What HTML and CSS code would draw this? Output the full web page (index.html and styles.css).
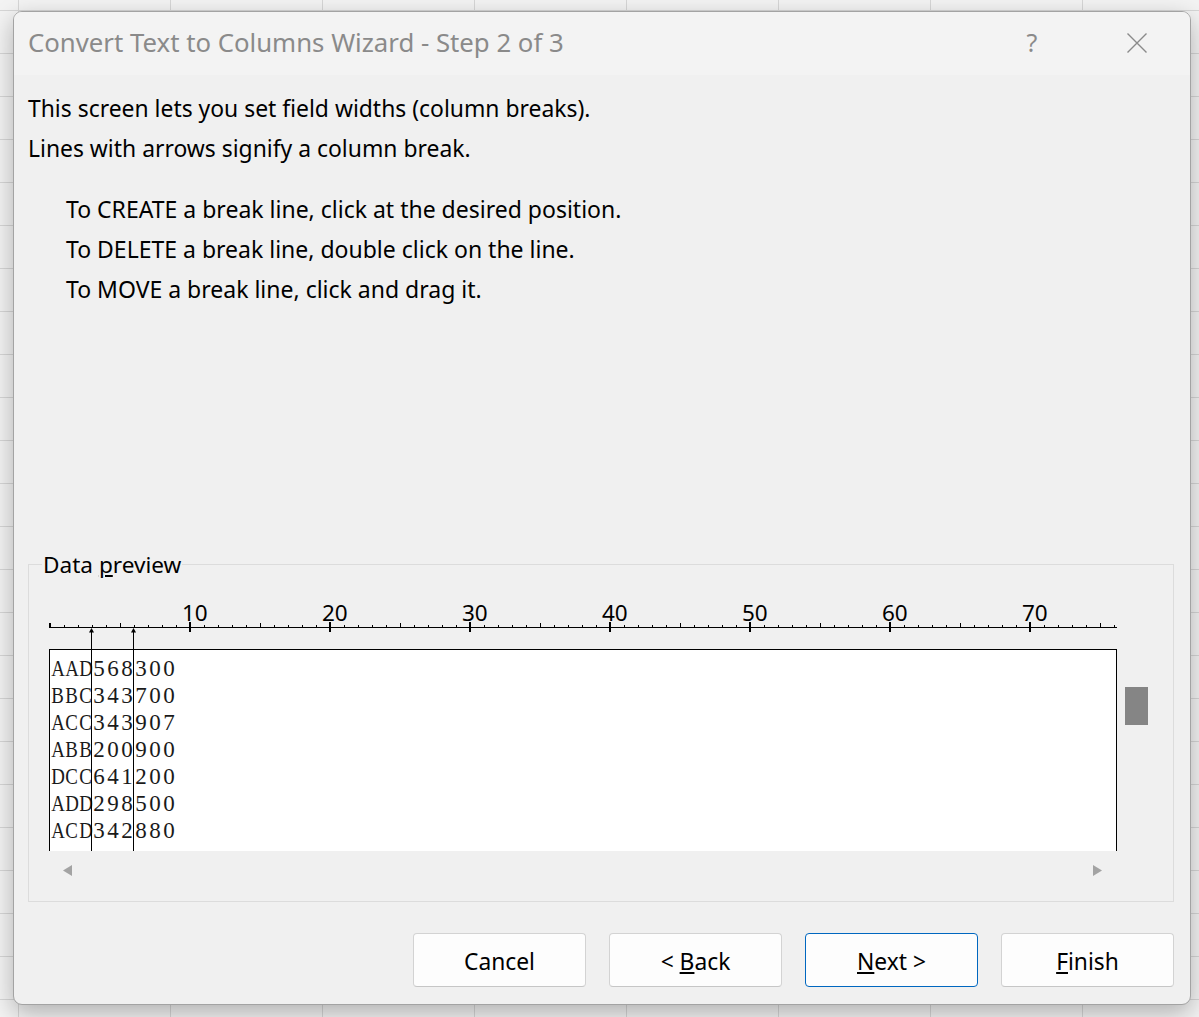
FILE: index.html
```html
<!DOCTYPE html>
<html lang="en">
<head>
<meta charset="utf-8">
<title>Convert Text to Columns Wizard - Step 2 of 3</title>
<link rel="stylesheet" href="styles.css">
</head>
<body>
<div class="dialog">
  <div class="titlebar">
    <span class="title">Convert Text to Columns Wizard - Step 2 of 3</span>
    <span class="help">?</span>
    <span class="close">
      <svg width="20" height="20" viewBox="0 0 20 20"><path d="M0.5 0.5 L19.5 19.5 M19.5 0.5 L0.5 19.5" stroke="#8a8a8a" stroke-width="1.4" fill="none"/></svg>
    </span>
  </div>
  <div class="content">
    <p class="intro">This screen lets you set field widths (column breaks).<br>Lines with arrows signify a column break.</p>
    <ul class="howto">
      <li>To CREATE a break line, click at the desired position.</li>
      <li>To DELETE a break line, double click on the line.</li>
      <li>To MOVE a break line, click and drag it.</li>
    </ul>
    <div class="group">
      <span class="legend">Data <u>p</u>review</span>
      <div class="preview">
        <div class="ruler-labels">
          <span>10</span><span>20</span><span>30</span><span>40</span><span>50</span><span>60</span><span>70</span>
        </div>
        <svg class="ticks" width="1068" height="13" viewBox="0 0 1068 13">
          <defs>
            <pattern id="minor" width="14" height="13" patternUnits="userSpaceOnUse"><rect x="1" y="4" width="1" height="2" fill="#000"/></pattern>
            <pattern id="mid" width="140" height="13" patternUnits="userSpaceOnUse"><rect x="71" y="2" width="1" height="4" fill="#000"/></pattern>
            <pattern id="major" x="140" width="140" height="13" patternUnits="userSpaceOnUse"><rect x="0" y="1" width="2" height="10" fill="#000"/></pattern>
          </defs>
          <rect x="0" y="6" width="1068" height="1" fill="#000"/>
          <rect x="0" y="2" width="2" height="5" fill="#000"/>
          <rect x="0" y="0" width="1068" height="13" fill="url(#minor)"/>
          <rect x="0" y="0" width="1068" height="13" fill="url(#mid)"/>
          <rect x="139" y="0" width="929" height="13" fill="url(#major)"/>
          <polygon points="42.5,7 40,11.5 45,11.5" fill="#000"/>
          <polygon points="84.5,7 82,11.5 87,11.5" fill="#000"/>
        </svg>
        <div class="data-row">
          <div class="data-box">
            <div class="line"><span>A</span><span>A</span><span>D</span><span>5</span><span>6</span><span>8</span><span>3</span><span>0</span><span>0</span></div>
            <div class="line"><span>B</span><span>B</span><span>C</span><span>3</span><span>4</span><span>3</span><span>7</span><span>0</span><span>0</span></div>
            <div class="line"><span>A</span><span>C</span><span>C</span><span>3</span><span>4</span><span>3</span><span>9</span><span>0</span><span>7</span></div>
            <div class="line"><span>A</span><span>B</span><span>B</span><span>2</span><span>0</span><span>0</span><span>9</span><span>0</span><span>0</span></div>
            <div class="line"><span>D</span><span>C</span><span>C</span><span>6</span><span>4</span><span>1</span><span>2</span><span>0</span><span>0</span></div>
            <div class="line"><span>A</span><span>D</span><span>D</span><span>2</span><span>9</span><span>8</span><span>5</span><span>0</span><span>0</span></div>
            <div class="line"><span>A</span><span>C</span><span>D</span><span>3</span><span>4</span><span>2</span><span>8</span><span>8</span><span>0</span></div>
          </div>
          <div class="vscroll"><div class="thumb"></div></div>
        </div>
        <div class="hscroll">
          <svg width="9" height="11" viewBox="0 0 9 11"><polygon points="0,5.5 9,0 9,11" fill="#a3a3a3"/></svg>
          <svg width="9" height="11" viewBox="0 0 9 11"><polygon points="9,5.5 0,0 0,11" fill="#a3a3a3"/></svg>
        </div>
        <div class="break b1"></div>
        <div class="break b2"></div>
      </div>
    </div>
    <div class="buttons">
      <button class="btn"><span>Cancel</span></button>
      <button class="btn"><span>&lt; <u>B</u>ack</span></button>
      <button class="btn primary"><span><u>N</u>ext &gt;</span></button>
      <button class="btn"><span><u>F</u>inish</span></button>
    </div>
  </div>
</div>
</body>
</html>
```
FILE: styles.css
```css
html, body {
  margin: 0;
}
body {
  width: 1199px;
  height: 1017px;
  overflow: hidden;
  box-sizing: border-box;
  padding: 11px 0 0 13px;
  background-color: #f3f3f3;
  background-image:
    linear-gradient(to right, #d6d6d6 1px, transparent 1px),
    linear-gradient(to bottom, #d6d6d6 1px, transparent 1px);
  background-size: 152px 43px, 152px 43px;
  background-position: 18px 0, 0 10px;
  font-family: "Noto Sans", "Open Sans", sans-serif;
  color: #000;
}
.dialog {
  width: 1178px;
  height: 994px;
  box-sizing: border-box;
  border: 1px solid #a3a3a3;
  border-radius: 9px;
  background: #f0f0f0;
  box-shadow: 0 8px 24px rgba(0, 0, 0, 0.28);
  display: flex;
  flex-direction: column;
  overflow: hidden;
}
.titlebar {
  height: 63px;
  flex: none;
  box-sizing: border-box;
  background: #f3f3f3;
  display: flex;
  align-items: center;
  padding: 0 0 4px 14px;
  color: #8a8a8a;
}
.title {
  flex: 1;
  font-size: 25.75px;
  white-space: nowrap;
}
.help {
  width: 46px;
  text-align: center;
  font-size: 25px;
  margin-right: 59px;
}
.close {
  width: 46px;
  display: flex;
  justify-content: center;
  margin-right: 30px;
  padding-top: 2px;
}
.close svg {
  display: block;
}
.content {
  flex: 1;
  display: flex;
  flex-direction: column;
  padding: 14px 16px 17px 14px;
}
.intro {
  margin: 0;
  font-size: 22.9px;
  line-height: 40px;
}
.howto {
  margin: 20px 0 0;
  padding-left: 38px;
  list-style: none;
  font-size: 23px;
  line-height: 40px;
}
.group {
  margin-top: 255px;
  height: 338px;
  box-sizing: border-box;
  border: 1px solid #dcdcdc;
  position: relative;
  padding: 39px 0 0 20px;
}
.legend {
  position: absolute;
  top: -15px;
  left: 13px;
  padding: 0 1px;
  background: #f0f0f0;
  font-size: 22.6px;
  line-height: 30px;
}
.preview {
  position: relative;
  width: 1124px;
}
.ruler-labels {
  display: flex;
  height: 17px;
  line-height: 18px;
  font-size: 22.5px;
  padding-left: 133px;
}
.ruler-labels span {
  width: 140px;
  flex: none;
}
.ticks {
  display: block;
}
.data-row {
  display: flex;
  margin-top: 15px;
  height: 202px;
}
.data-box {
  width: 1068px;
  flex: none;
  box-sizing: border-box;
  border: 1px solid #000;
  border-bottom: none;
  background: #fff;
  padding-top: 5px;
  font-family: "Liberation Serif", "Times New Roman", serif;
  font-size: 23px;
  color: #1a1a1a;
}
.line {
  height: 27px;
  line-height: 27px;
  white-space: nowrap;
}
.line span {
  display: inline-block;
  width: 14px;
  text-align: center;
}
.line span:nth-child(-n+3) {
  transform: scaleX(0.82);
}
.vscroll {
  flex: 1;
  padding: 38px 0 0 8px;
}
.thumb {
  width: 23px;
  height: 38px;
  background: #858585;
}
.hscroll {
  width: 1068px;
  height: 38px;
  box-sizing: border-box;
  display: flex;
  align-items: center;
  justify-content: space-between;
  padding: 0 15px 0 14px;
}
.hscroll svg {
  display: block;
}
.break {
  position: absolute;
  top: 25px;
  width: 1px;
  height: 222px;
  background: #000;
}
.b1 { left: 42px; }
.b2 { left: 84px; }
.buttons {
  display: flex;
  justify-content: flex-end;
  gap: 23px;
  margin-top: 31px;
}
.btn {
  width: 173px;
  height: 54px;
  box-sizing: border-box;
  border: 1px solid #d3d3d3;
  border-bottom-color: #c6c6c6;
  border-radius: 4px;
  background: #fdfdfd;
  font-family: "Noto Sans", "Open Sans", sans-serif;
  font-size: 22.8px;
  line-height: 30px;
  color: #000;
  text-align: center;
  padding: 4px 0 0;
}
.btn.primary {
  border-color: #0067c0;
}
```
